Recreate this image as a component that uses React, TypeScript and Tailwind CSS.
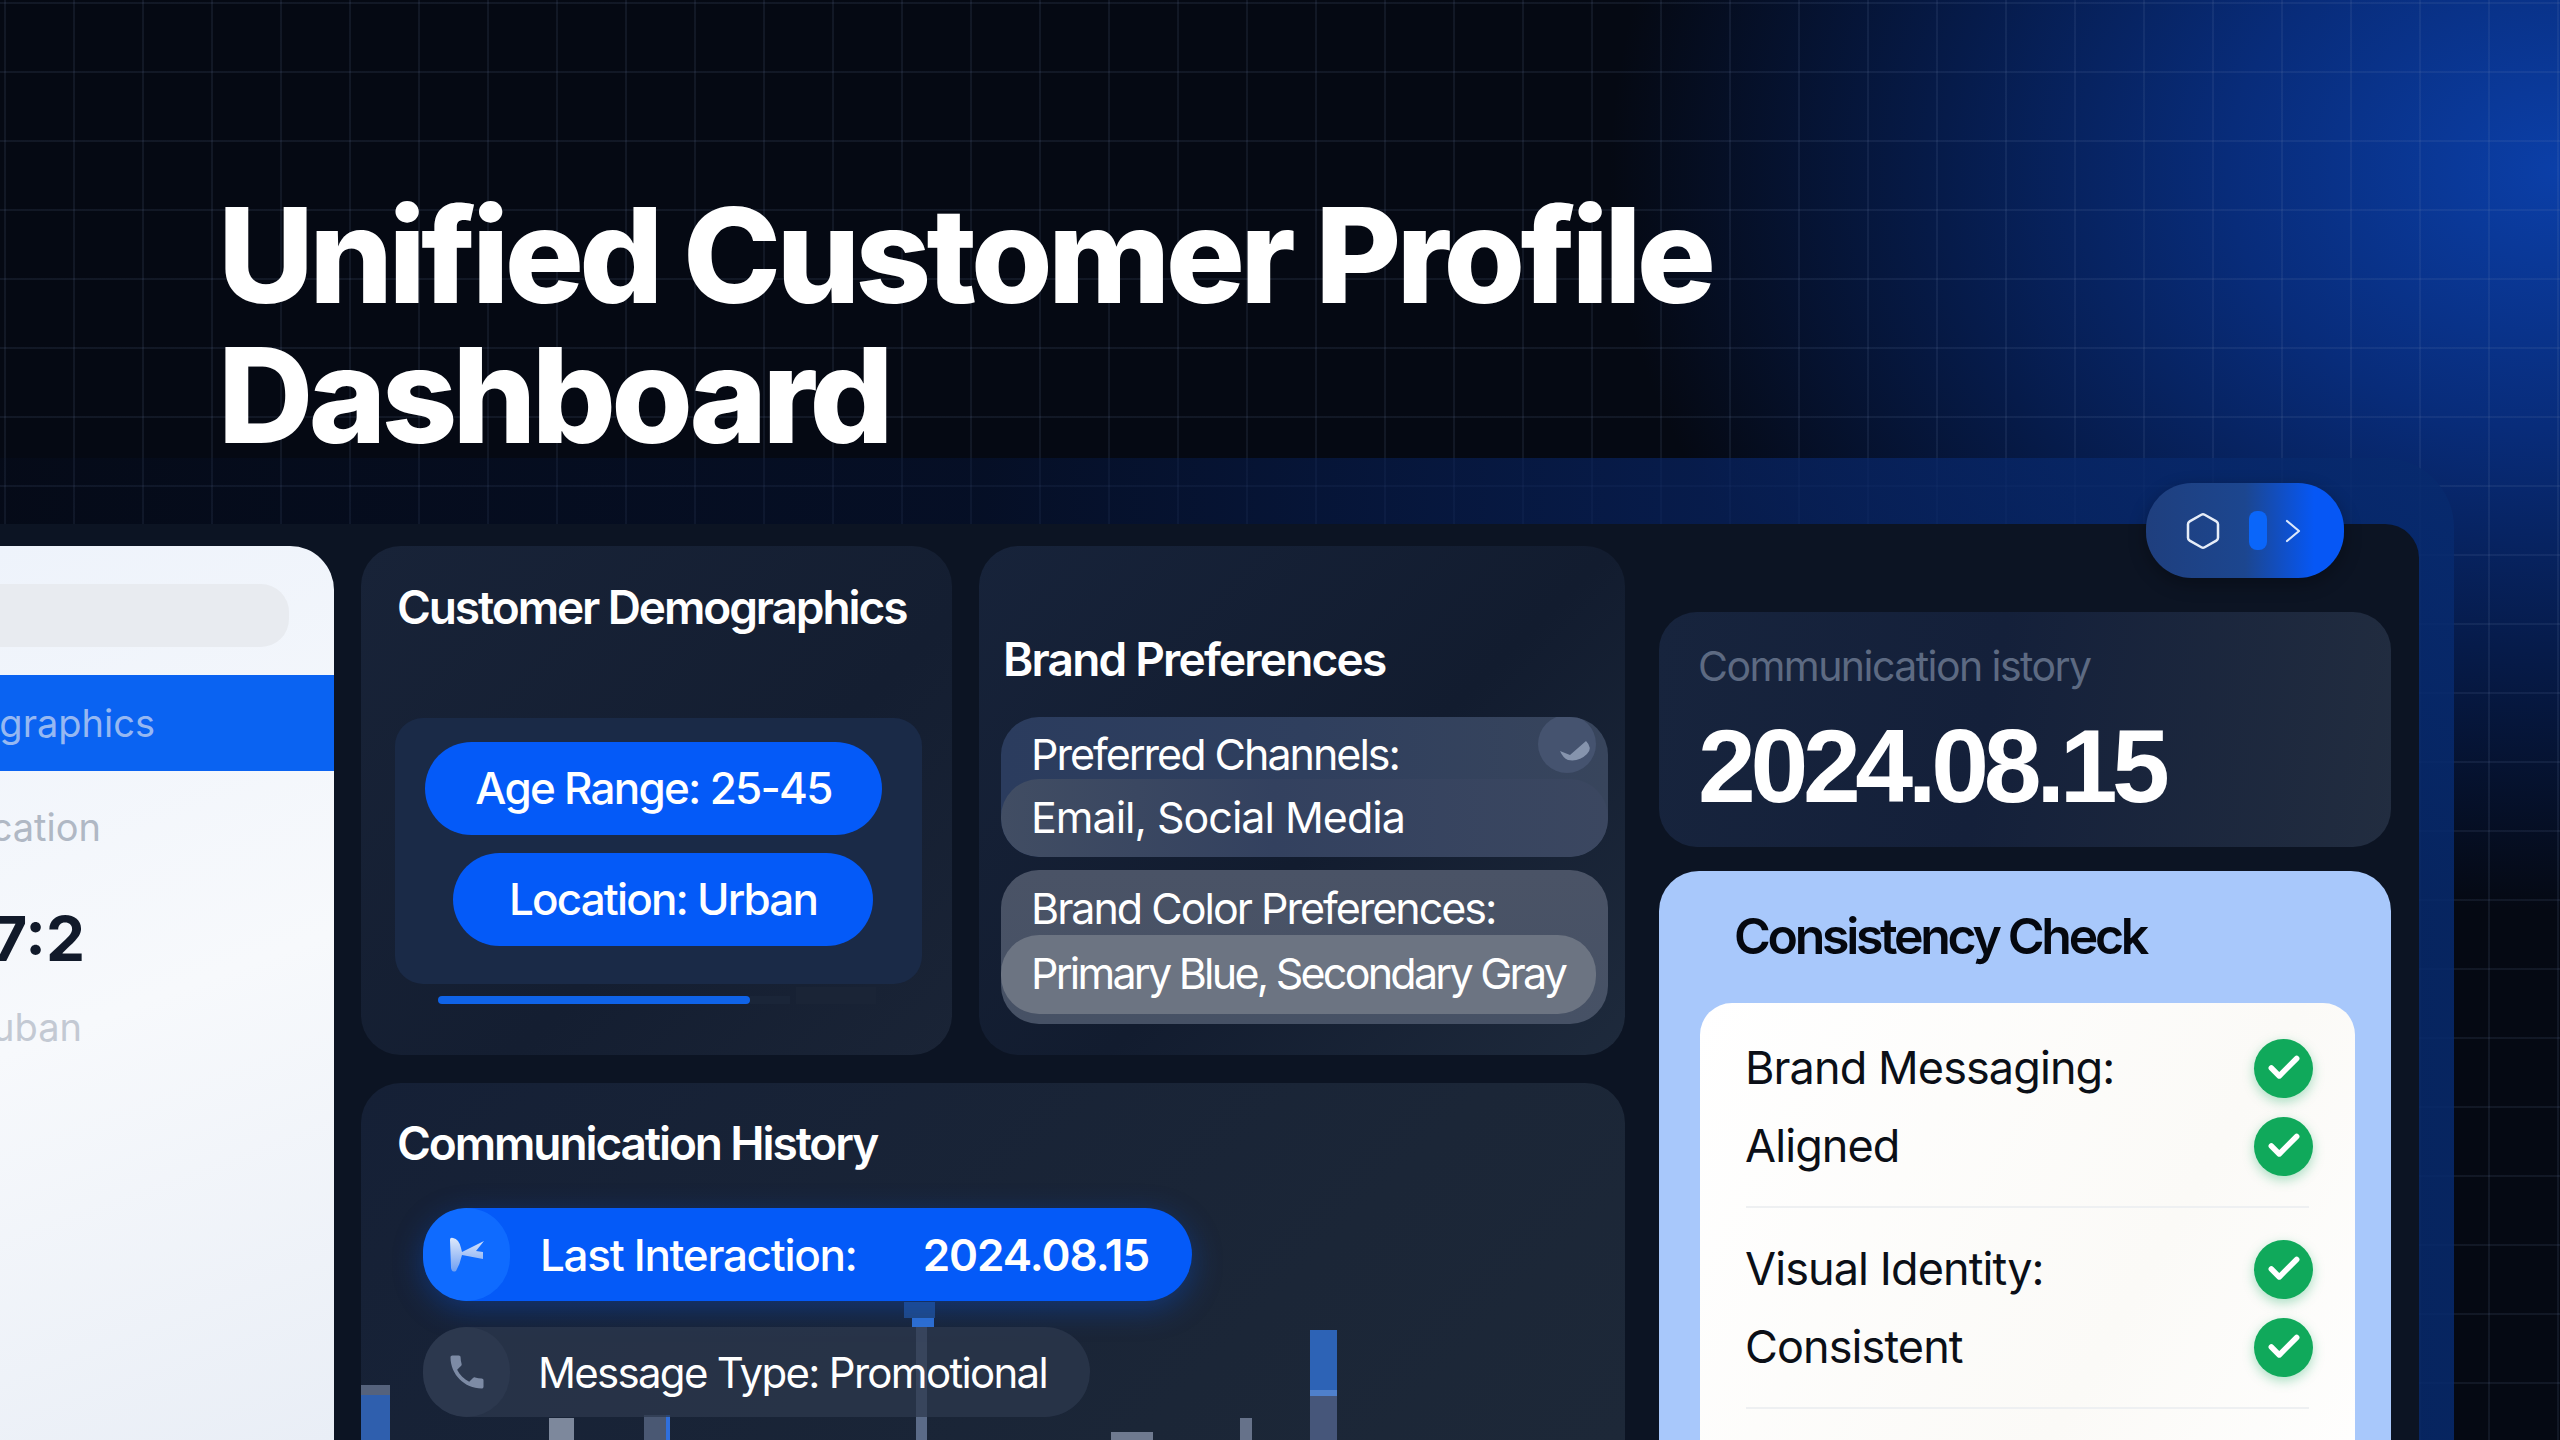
import { Check, Hexagon } from 'lucide-react';

const font = "font-['Inter','Liberation_Sans',sans-serif]";

const checkRows = ['Brand Messaging:', 'Aligned'];
const checkRows2 = ['Visual Identity:', 'Consistent'];

const CheckRow = ({ label }: { label: string }) => (
  <div className="mr-[-4px] flex h-[78px] items-center justify-between">
    <span className="ml-[-1px] whitespace-nowrap text-[45px] tracking-[-0.9px] text-[#0b0f17]">{label}</span>
    <span className="flex h-[59px] w-[59px] items-center justify-center rounded-full bg-[#10a95b] shadow-[0_4px_12px_rgba(16,169,91,0.35)]">
      <Check size={38} strokeWidth={3.5} className="text-white" />
    </span>
  </div>
);

const ChartBars = () => (
  <svg className="absolute bottom-0 left-0 h-[138px] w-[1264px]" viewBox="0 0 1264 138" fill="none">
    <rect x="0" y="83" width="29" height="55" fill="#2f5fae" />
    <rect x="0" y="83" width="29" height="10" fill="#55627c" />
    <rect x="188" y="116" width="25" height="22" fill="#7d889c" />
    <rect x="283" y="113" width="26" height="25" fill="#4a5873" />
    <rect x="305" y="113" width="4" height="25" fill="#2f6fdc" />
    <rect x="543" y="0" width="31" height="16" fill="#21477f" />
    <rect x="551" y="16" width="22" height="9" fill="#2f6fd0" />
    <rect x="555" y="25" width="11" height="113" fill="#5b6b88" />
    <rect x="750" y="130" width="42" height="8" fill="#6f7a90" />
    <rect x="879" y="116" width="12" height="22" fill="#66728a" />
    <rect x="949" y="28" width="27" height="65" fill="#2d63b6" />
    <rect x="949" y="88" width="27" height="6" fill="#4f80cc" />
    <rect x="949" y="94" width="27" height="44" fill="#46567a" />
  </svg>
);

const App = () => {
  return (
    <div className={`${font} relative h-[1440px] w-[2560px] overflow-hidden bg-[#050913] text-white`}>
      {/* glow + grid */}
      <div className="absolute inset-0 bg-[radial-gradient(ellipse_950px_740px_at_2560px_170px,#0b3fa8_0%,#082c7a_35%,#061b4a_65%,transparent_100%)]" />
      <div className="absolute inset-0 bg-[linear-gradient(to_right,rgba(125,145,185,0.11)_2px,transparent_2px),linear-gradient(to_bottom,rgba(125,145,185,0.11)_2px,transparent_2px)] bg-[size:69px_69px] bg-[position:4px_2px]" />

      <div className="relative flex h-full flex-col">
        <header className="h-[458px] pl-[218px] pt-[185px]">
          <h1 className="whitespace-nowrap text-[132px] font-extrabold leading-[140px] tracking-[-4.7px]">
            Unified Customer Profile
            <br />
            Dashboard
          </h1>
        </header>

        {/* outer frame */}
        <div className="relative mr-[106px] h-[982px] rounded-tr-[70px] bg-[linear-gradient(to_right,rgba(6,22,60,0.12)_0%,rgba(6,24,66,0.4)_40%,rgba(8,36,100,0.7)_70%,rgba(7,42,110,0.85)_100%)] pr-[35px] pt-[66px]">
          {/* floating control */}
          <div className="absolute left-[2146px] top-[25px] z-10 flex h-[95px] w-[198px] items-center rounded-[46px] bg-[linear-gradient(to_right,#1f3f7e_0%,#1c468f_50%,#0657f5_85%)] pl-[37px] shadow-[0_6px_18px_rgba(0,0,0,0.3)]">
            <Hexagon size={40} strokeWidth={1.5} className="text-[#e6edf8]" />
            <span className="ml-[26px] h-[39px] w-[18px] rounded-[8px] bg-[#0a66fa]" />
            <svg width="16" height="24" viewBox="0 0 16 24" fill="none" className="ml-[18px]">
              <path d="M2 2 L14 12 L2 22" stroke="#dce8fb" strokeWidth="2.2" strokeLinecap="round" strokeLinejoin="round" />
            </svg>
          </div>

          {/* dark panel */}
          <div className="flex h-[916px] rounded-tr-[34px] bg-[#0c1423] pt-[22px]">
            {/* sidebar, cut by the page edge */}
            <aside className="flex w-[334px] shrink-0 flex-col items-end overflow-hidden rounded-tr-[44px] bg-[linear-gradient(160deg,#eef3fb_0%,#f7f9fc_50%,#e9eef6_100%)] pt-[38px]">
              <div className="mr-[45px] h-[63px] w-[340px] shrink-0 rounded-[28px] bg-[#e8ebf0]" />
              <div className="mt-[28px] flex h-[96px] w-full shrink-0 items-center justify-end bg-[#0a63f2] pr-[179px]">
                <span className="text-[38px] text-[#96b8f2]">ographics</span>
              </div>
              <div className="mt-[33px] pr-[233px] text-[38px] leading-[46px] text-[#b0b8c4]">cation</div>
              <div className="mt-[57px] pr-[249px] text-[62px] font-bold leading-[64px] text-[#111a2a]">7:2</div>
              <div className="mt-[33px] pr-[252px] text-[38px] leading-[46px] text-[#c3c9d3]">uban</div>
            </aside>

            {/* middle column */}
            <div className="ml-[27px] flex w-[1264px] shrink-0 flex-col gap-[28px]">
              <div className="flex h-[509px] shrink-0 gap-[27px]">
                <section className="relative w-[591px] rounded-[40px] bg-[linear-gradient(135deg,#182338_0%,#141e31_60%,#1a2436_100%)] pl-[36px] pt-[32px]">
                  <h2 className="text-[46px] font-semibold leading-[58px] tracking-[-2.1px]">Customer Demographics</h2>
                  <div className="absolute left-[34px] top-[172px] flex h-[266px] w-[527px] flex-col rounded-[28px] bg-[#1a2a47] pt-[24px]">
                    <div className="ml-[30px] flex h-[93px] w-[457px] items-center justify-center rounded-full bg-[#045af8] pb-[2px] text-[44px] font-medium tracking-[-1.75px]">
                      Age Range: 25-45
                    </div>
                    <div className="ml-[58px] mt-[18px] flex h-[93px] w-[420px] items-center justify-center rounded-full bg-[#045af8] pb-[2px] text-[44px] font-medium tracking-[-1.85px]">
                      Location: Urban
                    </div>
                  </div>
                  <div className="absolute left-[77px] top-[450px] h-[8px] w-[312px] rounded-full bg-[#0f63e8]" />
                  <div className="absolute left-[389px] top-[450px] h-[8px] w-[40px] bg-[#1a2538]" />
                  <div className="absolute left-[435px] top-[441px] h-[17px] w-[80px] bg-[#1a2436]" />
                </section>

                <section className="w-[646px] rounded-[40px] bg-[linear-gradient(135deg,#17233a_0%,#121c2f_55%,#1e2a3c_100%)] pl-[22px] pr-[17px] pt-[84px]">
                  <h2 className="ml-[2px] text-[46px] font-semibold leading-[58px] tracking-[-1.8px]">Brand Preferences</h2>
                  <div className="relative mt-[29px] h-[140px] overflow-hidden rounded-[38px] bg-[linear-gradient(to_right,#2b3c5e_0%,#2f3f5e_50%,#38455c_100%)]">
                    <div className="flex h-[62px] items-center pl-[30px] pt-[12px] text-[43px] tracking-[-2px]">Preferred Channels:</div>
                    <div className="flex h-[78px] items-center rounded-[38px] bg-[linear-gradient(to_right,#414d63_0%,#33415f_45%,#3b4760_100%)] pb-[2px] pl-[30px] text-[43px] tracking-[-1px]">Email, Social Media</div>
                    <span className="absolute left-[537px] top-[-2px] flex h-[58px] w-[58px] items-center justify-center rounded-full bg-[#45536f]">
                      <svg width="34" height="22" viewBox="0 0 34 22" fill="none" className="ml-[18px] mt-[14px]">
                        <path d="M1 11 L11 15 L27 1 Q34 8 28 14 Q20 22 9 20 Q4 18 1 11 Z" fill="#8694ad" />
                      </svg>
                    </span>
                  </div>
                  <div className="mt-[13px] h-[154px] rounded-[38px] bg-[linear-gradient(to_bottom,#4a5366_0%,#465165_100%)]">
                    <div className="flex h-[65px] items-center whitespace-nowrap pl-[30px] pt-[12px] text-[43px] tracking-[-2px]">Brand Color Preferences:</div>
                    <div className="flex h-[79px] w-[595px] items-center whitespace-nowrap rounded-[38px] bg-[#6c7482] pb-[2px] pl-[30px] text-[43px] tracking-[-2.75px]">Primary Blue, Secondary Gray</div>
                  </div>
                </section>
              </div>

              <section className="relative flex-1 overflow-hidden rounded-t-[40px] bg-[linear-gradient(135deg,#152036_0%,#1b2637_70%,#1d2838_100%)] pl-[36px] pt-[31px]">
                <ChartBars />
                <h2 className="relative text-[46px] font-semibold leading-[58px] tracking-[-2.1px]">Communication History</h2>
                <div className="relative ml-[26px] mt-[36px] flex h-[93px] w-[769px] items-center rounded-full bg-[#045af8] shadow-[0_8px_30px_rgba(6,88,238,0.35)]">
                  <span className="flex h-[93px] w-[87px] items-center justify-center rounded-full bg-[#0f6bff]">
                    <svg width="38" height="38" viewBox="0 0 38 38" fill="none">
                      <defs>
                        <linearGradient id="kite" x1="0" y1="0" x2="0" y2="1">
                          <stop offset="0" stopColor="#dfe9fb" />
                          <stop offset="1" stopColor="#6f9ff2" />
                        </linearGradient>
                      </defs>
                      <path d="M2 4 Q2 1 5 2 Q11 3 13 12 L14 16 L36 5 L28 15 L35 16 L35 23 L14 19 Q12 28 8 35 Q4 37 3 32 Z" fill="url(#kite)" />
                    </svg>
                  </span>
                  <span className="ml-[30px] whitespace-nowrap text-[44px] font-medium tracking-[-1.3px]">Last Interaction:</span>
                  <span className="ml-[66px] whitespace-nowrap text-[44px] font-semibold tracking-[-1px]">2024.08.15</span>
                </div>
                <div className="relative ml-[26px] mt-[26px] flex h-[90px] w-[667px] items-center rounded-full bg-[rgba(44,56,78,0.75)]">
                  <span className="flex h-[90px] w-[87px] items-center justify-center rounded-full bg-[#2c384e]">
                    <svg width="44" height="44" viewBox="0 0 24 24" fill="#7d8ba5">
                      <path d="M6.62 10.79c1.44 2.83 3.76 5.14 6.59 6.59l2.2-2.2c.27-.27.67-.36 1.02-.24 1.12.37 2.33.57 3.57.57.55 0 1 .45 1 1V20c0 .55-.45 1-1 1-9.39 0-17-7.61-17-17 0-.55.45-1 1-1h3.5c.55 0 1 .45 1 1 0 1.25.2 2.45.57 3.57.11.35.03.74-.25 1.02l-2.2 2.2z" />
                    </svg>
                  </span>
                  <span className="ml-[28px] whitespace-nowrap text-[42px] tracking-[-1.7px]">Message Type: Promotional</span>
                </div>
              </section>
            </div>

            {/* right column */}
            <div className="ml-[34px] flex w-[732px] shrink-0 flex-col pt-[66px]">
              <section className="h-[235px] shrink-0 rounded-[38px] bg-[linear-gradient(100deg,#17243d_0%,#14203a_45%,#222d40_100%)] pl-[39px] pt-[29px]">
                <div className="text-[41px] leading-[50px] tracking-[-1.55px] text-[#5d6a82]">Communication istory</div>
                <div className="mt-[20px] font-['Liberation_Sans',sans-serif] text-[104px] font-bold leading-[110px] tracking-[-5.4px]">2024.08.15</div>
              </section>
              <section className="mt-[24px] flex-1 rounded-t-[40px] bg-[#a8c8fb] pt-[36px] text-[#05080f]">
                <h2 className="ml-[75px] text-[50px] font-semibold leading-[58px] tracking-[-3.3px]">Consistency Check</h2>
                <div className="ml-[41px] mt-[38px] h-[600px] w-[655px] rounded-t-[32px] bg-[linear-gradient(120deg,#ffffff_0%,#fbfaf7_60%,#ffffff_100%)] px-[46px] pt-[26px]">
                  {checkRows.map((label) => (
                    <CheckRow key={label} label={label} />
                  ))}
                  <div className="mt-[21px] h-[2px] bg-[#eef0f2]" />
                  <div className="mt-[22px]">
                    {checkRows2.map((label) => (
                      <CheckRow key={label} label={label} />
                    ))}
                  </div>
                  <div className="mt-[21px] h-[2px] bg-[#eef0f2]" />
                </div>
              </section>
            </div>
          </div>
        </div>
      </div>
    </div>
  );
};

export default App;
